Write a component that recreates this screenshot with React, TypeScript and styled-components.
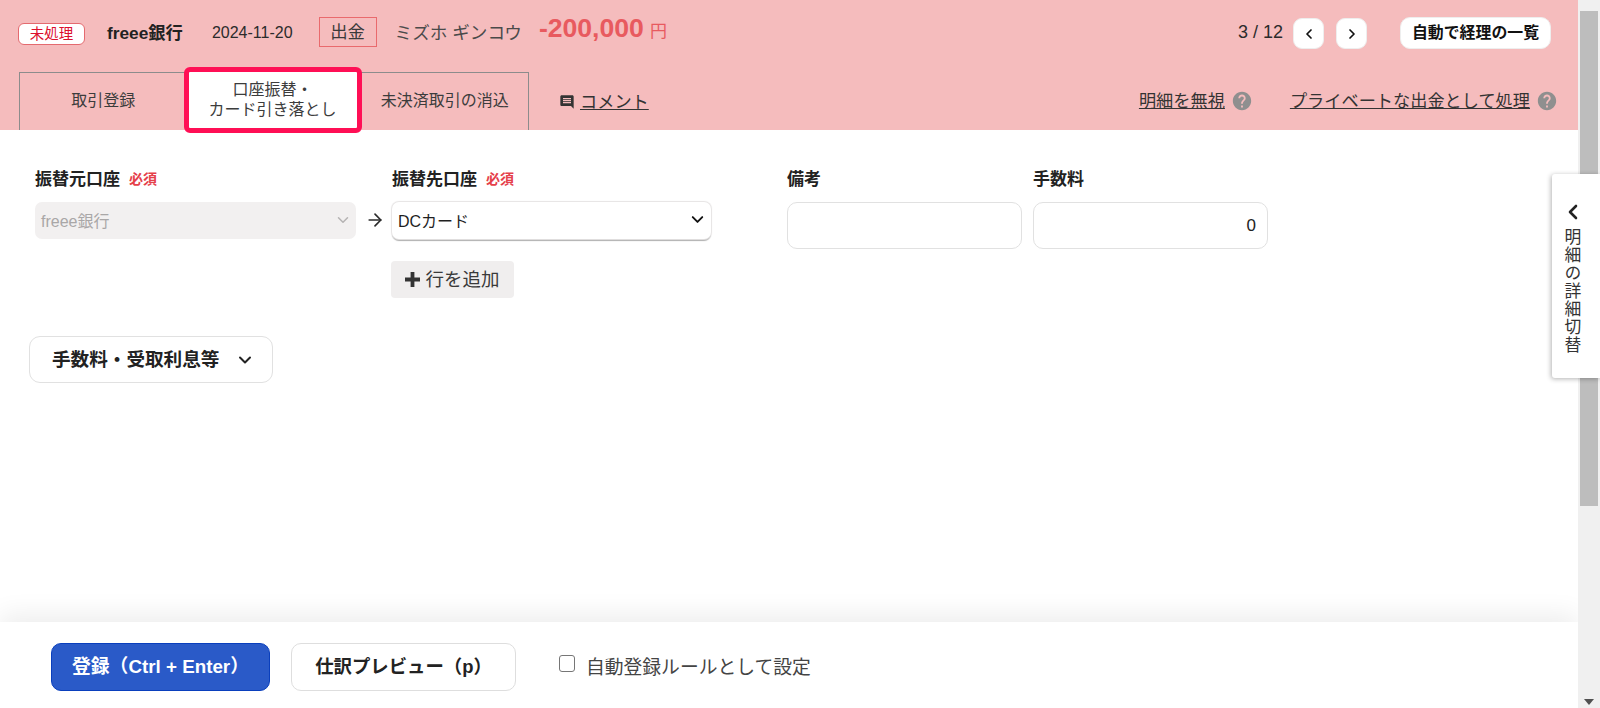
import React from "react";
import styled, { createGlobalStyle } from "styled-components";
import { MdComment, MdHelp } from "react-icons/md";
import { ArrowRight, ChevronDown, ChevronLeft, ChevronRight } from "lucide-react";

const Global = createGlobalStyle`
  html, body { margin: 0; padding: 0; background: #fff; overflow: hidden; }
  body { font-family: "Liberation Sans", "Noto Sans CJK JP", sans-serif; color: #2b2b2b; }
  * { box-sizing: border-box; }
`;

const Page = styled.div`
  position: relative; display: flex; width: 1600px; height: 708px; overflow: hidden;
`;
const Main = styled.div`
  flex: 0 0 1578px; display: flex; flex-direction: column; height: 708px;
`;
const Header = styled.header`
  height: 130px; background: #f5bcbd; display: flex; flex-direction: column; flex: none;
`;
const TopRow = styled.div`
  height: 72px; display: flex; align-items: flex-start; padding: 17px 27px 0 18px;
`;
const Status = styled.span`
  width: 67px; height: 22px; margin-top: 6px; background: #fff; border: 1px solid #e46a6f; border-radius: 6px;
  color: #dc0f2d; font-size: 14.5px; line-height: 20px; text-align: center;
`;
const Bank = styled.span`
  margin: 4px 0 0 22px; font-size: 17.3px; font-weight: 700; line-height: 24px; color: #222;
`;
const DateText = styled.span`
  margin: 4px 0 0 29px; font-size: 16px; line-height: 24px; color: #2b2b2b;
`;
const Kind = styled.span`
  width: 58px; height: 30px; margin-left: 26px; border: 1px solid #e96a6d; font-size: 17.4px; line-height: 28px;
  text-align: center; color: #3a3a3a;
`;
const Payee = styled.span`
  margin: 4px 0 0 18px; font-size: 17.6px; line-height: 24px; color: #4a4a4a; white-space: nowrap;
`;
const Amount = styled.span`
  margin-left: 17px; margin-top: -5px; font-size: 26.6px; font-weight: 700; line-height: 32px; color: #e85a5f;
`;
const Yen = styled.span`
  margin: 3px 0 0 6px; font-size: 17px; line-height: 24px; color: #e85a5f;
`;
const Spacer = styled.div`
  flex: 1;
`;
const Pager = styled.span`
  margin: 3px 10px 0 0; font-size: 18px; line-height: 24px; color: #2b2b2b;
`;
const NavButton = styled.button`
  width: 31px; height: 31px; margin: 1px 12px 0 0; padding: 0; background: #fff; border: 1px solid #eee; border-radius: 9px;
  display: flex; align-items: center; justify-content: center; color: #111;
`;
const ListButton = styled.button`
  width: 151px; height: 32px; margin-left: 21px; padding: 0; background: #fff; border: 1px solid #eee; border-radius: 10px;
  font: 700 15.9px/30px "Liberation Sans", "Noto Sans CJK JP", sans-serif; color: #111;
`;
const TabRow = styled.div`
  flex: 1; display: flex; align-items: stretch; padding-left: 19px;
`;
const Tabs = styled.div`
  width: 510px; height: 58px; display: flex; border: 1px solid #8c8c8c; border-bottom: 0;
`;
const Tab = styled.div<{ $active?: boolean }>`
  flex: 1 1 0; display: flex; align-items: center; justify-content: center; text-align: center; padding-bottom: 2px;
  font-size: 16px; line-height: 20px; color: #3c3c3c; white-space: nowrap;
  ${(p) => p.$active && `
    flex: 0 0 178px; position: relative; height: 66px; margin: -6px 0 -2px -3px; padding: 0;
    background: #fff; border: 5px solid #ff0f55; border-radius: 6px; z-index: 2;
  `}
`;
const Comment = styled.div`
  margin: 19px 0 0 30px; height: 22px; display: flex; align-items: center; gap: 5px; color: #333;
`;
const Link = styled.a`
  font-size: 17.2px; line-height: 22px; color: #333; text-decoration: underline; white-space: nowrap;
`;
const Actions = styled.div`
  margin: 17px 20px 0 auto; height: 24px; display: flex; align-items: center; color: #8f8f8f;
`;
const Help = styled(MdHelp)`
  margin: 0 37px 0 6px; &:last-child { margin-right: 0; }
`;
const Content = styled.div`
  flex: 1; padding: 35px 0 0 29px; min-height: 0;
`;
const FormRow = styled.div`
  display: flex; align-items: flex-start; padding-left: 6px;
`;
const Field = styled.div<{ $w: number; $ml?: number }>`
  width: ${(p) => p.$w}px; margin-left: ${(p) => p.$ml ?? 0}px; flex: none;
`;
const Label = styled.div`
  height: 25px; display: flex; align-items: center; gap: 9px; font-size: 17px; font-weight: 700; color: #222; margin-bottom: 12px; white-space: nowrap;
`;
const Required = styled.span`
  font-size: 14px; font-weight: 700; color: #e5404a;
`;
const Select = styled.div<{ $disabled?: boolean }>`
  height: 37px; display: flex; align-items: center; justify-content: space-between; padding: 0 4px 2px 6px;
  font-size: 16px; border-radius: 7px;
  background: ${(p) => (p.$disabled ? "#f2f0f0" : "#fff")};
  color: ${(p) => (p.$disabled ? "#a9a7a7" : "#1f1f1f")};
  box-shadow: ${(p) => (p.$disabled ? "none" : "0 0 1px 1px #e6e4e4, 0 2px 1px #aaa")};
`;
const Arrow = styled(ArrowRight)`
  flex: none; margin: 45px 7px 0 9px;
`;
const AddButton = styled.button`
  width: 123px; height: 37px; margin: 22px 0 0 -1px; padding: 0; border: 0; border-radius: 4px; background: #f0eeee;
  display: flex; align-items: center; justify-content: center; gap: 5px;
  font: 400 18.5px/24px "Liberation Sans", "Noto Sans CJK JP", sans-serif; color: #3a3a3a;
`;
const TextBox = styled.input`
  display: block; width: 100%; height: 47px; padding: 0 11px; border: 1px solid #e1e1e1; border-radius: 10px; background: #fff;
  font: 400 17px "Liberation Sans", sans-serif; color: #222; text-align: ${(p) => (p.value ? "right" : "left")};
  outline: none;
`;
const Accordion = styled.button`
  width: 244px; height: 47px; margin-top: 38px; padding: 0 0 0 22px; border: 1px solid #e1e1e1; border-radius: 11px; background: #fff;
  display: flex; align-items: center; gap: 16px;
  font: 700 18.6px/24px "Liberation Sans", "Noto Sans CJK JP", sans-serif; color: #222; white-space: nowrap;
`;
const Footer = styled.footer`
  flex: none; height: 86px; background: #fff; display: flex; align-items: flex-start; padding: 21px 0 0 51px;
  box-shadow: 0 -8px 24px rgba(0, 0, 0, 0.07); position: relative;
`;
const Primary = styled.button`
  width: 219px; height: 48px; padding: 0; border: 1px solid #0a3fbd; border-radius: 10px; background: #2a5ac8; color: #fff;
  font: 700 18.8px/24px "Liberation Sans", "Noto Sans CJK JP", sans-serif; white-space: nowrap;
`;
const Secondary = styled.button`
  width: 225px; height: 48px; margin-left: 21px; padding: 0; border: 1px solid #dedede; border-radius: 10px; background: #fff; color: #222;
  font: 700 18.4px/24px "Liberation Sans", "Noto Sans CJK JP", sans-serif; white-space: nowrap;
`;
const Check = styled.label`
  margin: 10px 0 0 43px; height: 24px; display: flex; align-items: center; gap: 11px; font-size: 18.8px; color: #444;
`;
const Box = styled.input`
  appearance: none; width: 16px; height: 17px; margin: 0 0 3px; border: 1px solid #767676; border-radius: 3px; background: #fff;
`;
const ScrollTrack = styled.div`
  position: relative; flex: 0 0 22px; height: 708px; background: #f0f0f0; padding: 11px 2px 0;
`;
const Thumb = styled.div`
  height: 495px; background: #bdbdbd;
`;
const DownArrow = styled.div`
  position: absolute; left: 6px; bottom: 3px; width: 0; height: 0;
  border-left: 5px solid transparent; border-right: 5px solid transparent; border-top: 6px solid #505050;
`;
const SideTab = styled.div`
  position: absolute; right: 0; top: 174px; width: 48px; height: 204px; background: #fff; border-radius: 3px 0 0 3px;
  box-shadow: -1px 1px 5px rgba(0, 0, 0, 0.3); display: flex; flex-direction: column; align-items: center; padding: 26px 7px 0 0; color: #222;
`;
const SideText = styled.span`
  writing-mode: vertical-rl; margin: 4px 3px 0 0; font-size: 16.8px; letter-spacing: 1.3px; line-height: 20px; white-space: nowrap; color: #333;
`;

const PlusIcon = () => (
  <svg width="15" height="15" viewBox="0 0 15 15" aria-hidden="true">
    <path d="M5.6 0h3.8v5.6H15v3.8H9.4V15H5.6V9.4H0V5.6h5.6z" fill="#333" />
  </svg>
);

export default function App() {
  return (
    <Page>
      <Global />
      <Main>
        <Header>
          <TopRow>
            <Status>未処理</Status>
            <Bank>freee銀行</Bank>
            <DateText>2024-11-20</DateText>
            <Kind>出金</Kind>
            <Payee>ミズホ ギンコウ</Payee>
            <Amount>-200,000</Amount>
            <Yen>円</Yen>
            <Spacer />
            <Pager>3 / 12</Pager>
            <NavButton aria-label="前へ"><ChevronLeft size={16} strokeWidth={2.6} /></NavButton>
            <NavButton aria-label="次へ"><ChevronRight size={16} strokeWidth={2.6} /></NavButton>
            <ListButton>自動で経理の一覧</ListButton>
          </TopRow>
          <TabRow>
            <Tabs>
              <Tab>取引登録</Tab>
              <Tab $active>口座振替・<br />カード引き落とし</Tab>
              <Tab>未決済取引の消込</Tab>
            </Tabs>
            <Comment>
              <MdComment size={16} />
              <Link>コメント</Link>
            </Comment>
            <Actions>
              <Link>明細を無視</Link>
              <Help size={22} />
              <Link>プライベートな出金として処理</Link>
              <Help size={22} />
            </Actions>
          </TabRow>
        </Header>
        <Content>
          <FormRow>
            <Field $w={321}>
              <Label>振替元口座<Required>必須</Required></Label>
              <Select $disabled>freee銀行<ChevronDown size={18} color="#b5b3b3" /></Select>
            </Field>
            <Arrow size={20} />
            <Field $w={319}>
              <Label>振替先口座<Required>必須</Required></Label>
              <Select>DCカード<ChevronDown size={19} color="#111" strokeWidth={2.4} /></Select>
              <AddButton><PlusIcon />行を追加</AddButton>
            </Field>
            <Field $w={235} $ml={76}>
              <Label>備考</Label>
              <TextBox readOnly value="" />
            </Field>
            <Field $w={235} $ml={11}>
              <Label>手数料</Label>
              <TextBox readOnly value="0" />
            </Field>
          </FormRow>
          <Accordion>手数料・受取利息等<ChevronDown size={20} strokeWidth={2.4} /></Accordion>
        </Content>
        <Footer>
          <Primary>登録（Ctrl + Enter）</Primary>
          <Secondary>仕訳プレビュー（p）</Secondary>
          <Check><Box type="checkbox" />自動登録ルールとして設定</Check>
        </Footer>
      </Main>
      <ScrollTrack>
        <Thumb />
        <DownArrow />
      </ScrollTrack>
      <SideTab>
        <ChevronLeft size={24} strokeWidth={2.6} />
        <SideText>明細の詳細切替</SideText>
      </SideTab>
    </Page>
  );
}
